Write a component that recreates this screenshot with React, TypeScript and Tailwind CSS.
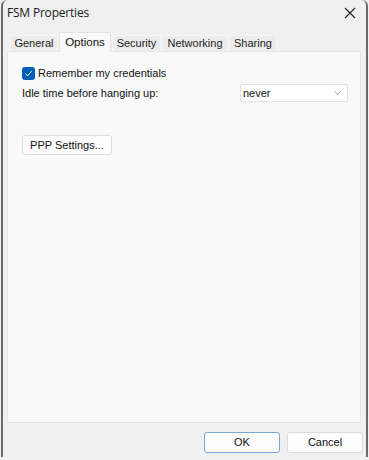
import React from "react";

const tabs = [
  { label: "General", w: "w-[48px]", sel: false },
  { label: "Options", w: "w-[52px]", sel: true },
  { label: "Security", w: "w-[49px]", sel: false },
  { label: "Networking", w: "w-[66px]", sel: false },
  { label: "Sharing", w: "w-[48px]", sel: false },
];

export default function App() {
  return (
    <div className="w-[369px] h-[460px] bg-[#f0f0f0] overflow-hidden font-['Liberation_Sans',Arial,sans-serif] text-[11px] text-[#111]">
      <div className="ml-[1px] w-[367px] h-[457px] border-l-2 border-r-2 border-[#6a6a6a] rounded-tl-[6px] rounded-tr-[6px] bg-[#f0f0f0] flex flex-col">
        {/* Title bar */}
        <div className="h-[26px] flex items-center justify-between pl-[4px] pr-[8px]">
          <span className="font-['Open_Sans',sans-serif] text-[12px] tracking-[-0.2px] text-[#1a1a1a]">FSM Properties</span>
          <svg width="12" height="12" viewBox="0 0 12 12" className="mr-[2px]">
            <path d="M1 1 L11 11 M11 1 L1 11" stroke="#222" strokeWidth="1.1" fill="none" />
          </svg>
        </div>
        {/* Tabs */}
        <div className="h-[25px] flex items-end pl-[7px] gap-[1px] relative z-10">
          {tabs.map((t) =>
            t.sel ? (
              <div
                key={t.label}
                className={`${t.w} h-[20px] -mb-[1px] bg-[#f9f9f9] border border-b-0 border-[#e3e3e3] flex items-center justify-center text-[11.5px] text-[#111]`}
              >
                {t.label}
              </div>
            ) : (
              <div
                key={t.label}
                className={`${t.w} h-[16px] bg-[#ececec] border border-b-0 border-[#f6f6f6] flex items-center justify-center text-[#222]`}
              >
                {t.label}
              </div>
            )
          )}
        </div>
        {/* Panel */}
        <div className="ml-[4px] w-[354px] h-[372px] bg-[#f9f9f9] border border-[#e6e6e6] flex flex-col pl-[14px] pt-[15px]">
          <div className="flex items-center h-[13px]">
            <div className="w-[13px] h-[13px] rounded-[3px] bg-[#005fb8] flex items-center justify-center">
              <svg width="9" height="9" viewBox="0 0 9 9">
                <path d="M1.5 4.8 L3.6 6.8 L7.6 2.2" stroke="white" strokeWidth="1" fill="none" />
              </svg>
            </div>
            <span className="ml-[3px]">Remember my credentials</span>
          </div>
          <div className="flex items-center mt-[4px] h-[18px]">
            <span className="w-[218px]">Idle time before hanging up:</span>
            <div className="w-[108px] h-[18px] bg-white border border-[#e0e0e0] rounded-[2px] flex items-center justify-between pl-[2px] pr-[6px]">
              <span>never</span>
              <svg width="7" height="4" viewBox="0 0 7 4">
                <path d="M0.5 0.5 L3.5 3.2 L6.5 0.5" stroke="#777" strokeWidth="0.8" fill="none" />
              </svg>
            </div>
          </div>
          <div className="mt-[33px]">
            <button className="w-[90px] h-[20px] bg-[#fdfdfd] border border-[#dcdcdc] rounded-[3px] text-[11px] text-[#111] flex items-center justify-center">
              PPP Settings...
            </button>
          </div>
        </div>
        {/* Bottom buttons */}
        <div className="mt-[9px] flex justify-end gap-[7px] pr-[3px]">
          <button className="w-[76px] h-[21px] bg-[#fdfdfd] border border-[#7aa7d8] rounded-[3px] text-[11px] text-[#111] flex items-center justify-center">
            OK
          </button>
          <button className="w-[76px] h-[21px] bg-[#fdfdfd] border border-[#dcdcdc] rounded-[3px] text-[11px] text-[#111] flex items-center justify-center">
            Cancel
          </button>
        </div>
      </div>
    </div>
  );
}
